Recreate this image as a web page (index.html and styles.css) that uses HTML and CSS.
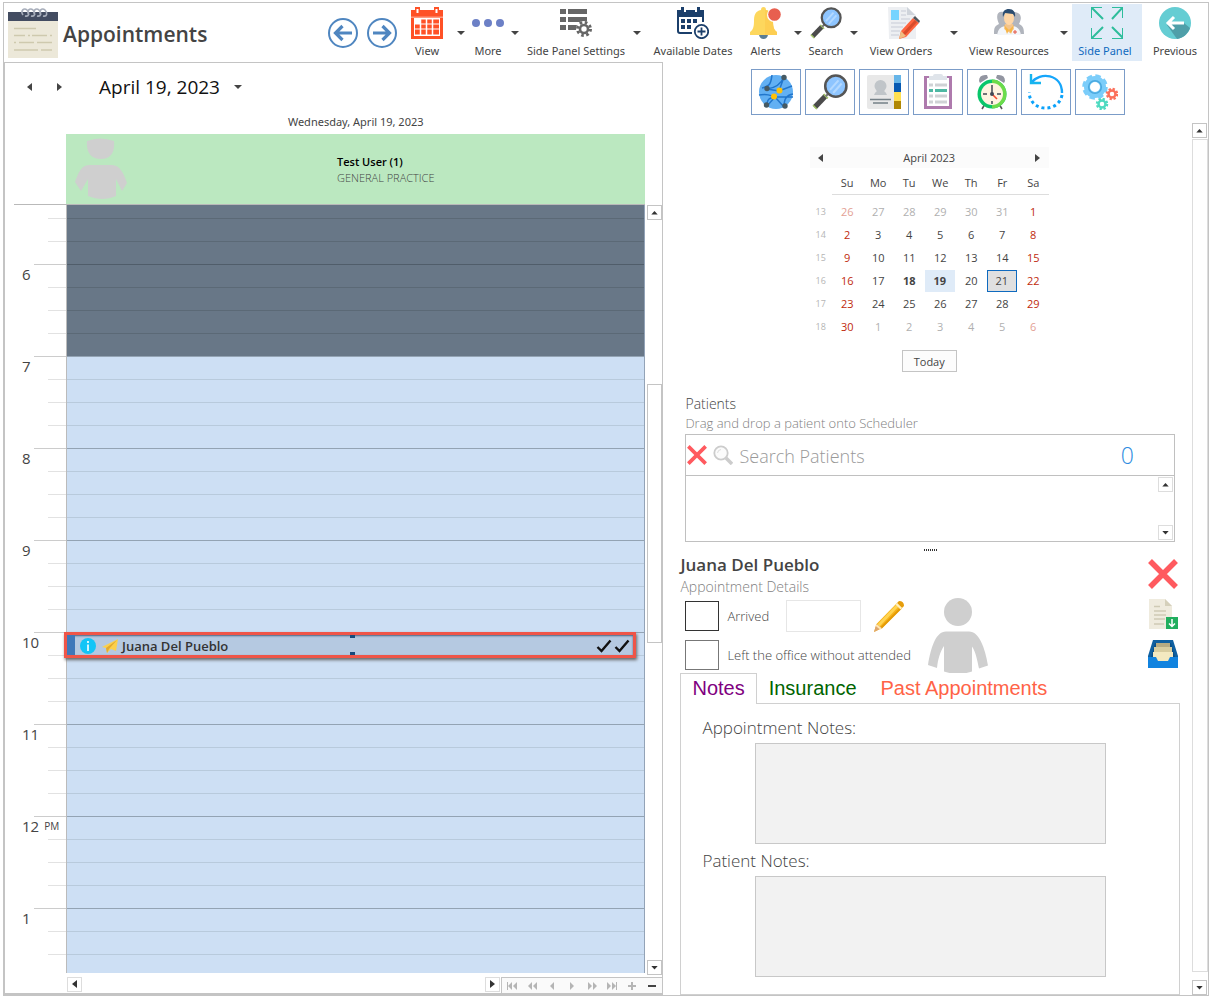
FILE: index.html
```html
<!DOCTYPE html>
<html lang="en">
<head>
<meta charset="utf-8">
<title>Appointments</title>
<link rel="stylesheet" href="styles.css">
</head>
<body>
<svg class="defs" aria-hidden="true">
  <symbol id="caret" viewBox="0 0 8 4"><path d="M0 0h8L4 4z" fill="#444"/></symbol>
  <symbol id="left" viewBox="0 0 5 8"><path d="M5 0v8L0 4z" fill="currentColor"/></symbol>
  <symbol id="right" viewBox="0 0 5 8"><path d="M0 0v8l5-4z" fill="currentColor"/></symbol>
  <symbol id="up" viewBox="0 0 8 5"><path d="M0 4.500h8L4 0z" fill="currentColor"/></symbol>
  <symbol id="down" viewBox="0 0 8 5"><path d="M0 0h8L4 4.500z" fill="currentColor"/></symbol>
  <symbol id="cross" viewBox="0 0 30 30"><path d="M2 2l26 26M28 2L2 28" stroke="#ff5a5f" stroke-width="5.500" fill="none"/></symbol>
  <symbol id="glass" viewBox="0 0 34 34">
    <path d="M2.500 31.500L13 20.500" stroke="#4b4b4b" stroke-width="5"/>
    <path d="M1 29.500l3.500 3.500M11 19l4 4" stroke="#a4c66a" stroke-width="1.500"/>
    <path d="M13 21l4-4" stroke="#777" stroke-width="2"/>
    <circle cx="22.500" cy="11.500" r="10" fill="#8ec5ff" stroke="#555" stroke-width="2.400"/>
    <path d="M17 15l8-9M20 18l8-9" stroke="#b4d9ff" stroke-width="2"/>
  </symbol>
  <symbol id="person" viewBox="0 0 60 75">
    <circle cx="30" cy="14" r="14" fill="#cfcfcf"/>
    <path d="M18 33.500h23c10 0 16 16 19 34l-9 3c-2-9-3-16-7-22v25c-8 3-20 3-28 0V48c-4 6-6 13-7 22l-9-3c3-18 8-33.500 18-33.500z" fill="#cfcfcf"/>
  </symbol>
</svg>
<div class="app">
  <header class="top">
    <svg class="logo" viewBox="0 0 50 50">
      <path d="M0 4h50v46H0z" fill="#ece8d9"/><path d="M0 4h50v9H0z" fill="#434c61"/>
      <g fill="none" stroke="#a8aebb" stroke-width="1.600"><path d="M15 7c-3-4 1-8 4-5s2 7-2 6M21 7c-3-4 1-8 4-5s2 7-2 6M27 7c-3-4 1-8 4-5s2 7-2 6M33 7c-3-4 1-8 4-5s2 7-2 6"/></g>
      <path d="M6 20.500h22M6 27.500h11M20 27.500h2M24 27.500h15M42 27.500h2M6 34.500h2M11 34.500h15M29 34.500h15M6 42h24M33 42h11" stroke="#cec9ae" stroke-width="1.700"/>
    </svg>
    <h1 class="title">Appointments</h1>
    <nav class="tools" aria-label="Toolbar">
      <button class="round" aria-label="Back"><svg viewBox="0 0 32 32"><circle cx="16" cy="16" r="14" fill="#fff" stroke="#4f86c0" stroke-width="2"/><path d="M25 16H9M15.500 9L8.500 16l7 7" fill="none" stroke="#4f86c0" stroke-width="3.200"/></svg></button>
      <button class="round" aria-label="Forward"><svg viewBox="0 0 32 32"><circle cx="16" cy="16" r="14" fill="#fff" stroke="#4f86c0" stroke-width="2"/><path d="M7 16h16M16.500 9l7 7-7 7" fill="none" stroke="#4f86c0" stroke-width="3.200"/></svg></button>
      <button class="tool t-view"><svg class="ic" viewBox="0 0 32 32"><path d="M0 3h4V0h5v3h14V0h5v3h4v29H0z" fill="#ff5126"/><path d="M5.500 2h2v4h-2zM24.500 2h2v4h-2z" fill="#fff"/><path d="M0 9.500h32v1.500H0z" fill="#ff9a80"/><path d="M3 11h26v18H3z" fill="#fff"/><path d="M10 12.500h18v4H10zM4 17.500h24v4H4zM4 22.500h24v5H4z" fill="#ff5126"/><path d="M9.500 12v16M15.500 12v16M21.500 12v16" stroke="#fff" stroke-width="1.500"/></svg><span>View</span></button>
      <button class="drop" aria-label="View options"><svg><use href="#caret"/></svg></button>
      <button class="tool t-more"><svg class="ic" viewBox="0 0 32 32"><g fill="#6c80c6"><circle cx="4" cy="16" r="4"/><circle cx="16" cy="16" r="4"/><circle cx="28" cy="16" r="4"/></g></svg><span>More</span></button>
      <button class="drop" aria-label="More options"><svg><use href="#caret"/></svg></button>
      <button class="tool t-settings"><svg class="ic" viewBox="0 0 32 32"><path d="M0 2h6v5H0zM8 2h19v5H8zM0 10h6v5H0zM8 10h19v5H8zM0 18h6v5H0zM8 18h10v5H8z" fill="#666"/><circle cx="24" cy="22" r="8" fill="#fff"/><circle cx="24" cy="22" r="6.500" fill="none" stroke="#666" stroke-width="3" stroke-dasharray="2.600 2.500"/><circle cx="24" cy="22" r="4" fill="#fff" stroke="#666" stroke-width="2.600"/></svg><span>Side Panel Settings</span></button>
      <button class="drop" aria-label="Side panel options"><svg><use href="#caret"/></svg></button>
      <button class="tool t-dates"><svg class="ic" viewBox="0 0 32 32"><path d="M1 4v20q0 2 2 2h12M26 4v11" fill="none" stroke="#1b3f6b" stroke-width="2"/><path d="M0 10V3h4V0h3v5h2V3h9v2h2V0h3v3h4v7z" fill="#1b3f6b"/><path d="M4 12h4v4H4zM10 12h4v4h-4zM16 12h4v4h-4zM4 18h4v4H4zM10 18h4v4h-4z" fill="#1b3f6b"/><circle cx="24.500" cy="24.500" r="6.700" fill="#fff" stroke="#1b3f6b" stroke-width="1.800"/><path d="M20.500 24.500h8M24.500 20.500v8" stroke="#1b3f6b" stroke-width="1.800"/></svg><span>Available Dates</span></button>
      <button class="tool t-alerts"><svg class="ic" viewBox="0 0 32 32"><path d="M9 28h9q-1 4-4.500 4T9 28z" fill="#5a7d95"/><path d="M11 3q0-3 2.500-3T16 3c6 1 7 6 7 11 0 6 1 9 4 11v3H0v-3c3-2 4-5 4-11 0-5 1-10 7-11z" fill="#fdd75d"/><path d="M15 3c7 1 7 6 8 11 0 6 1 9 4 11v3H15z" fill="#fdce52"/><circle cx="24" cy="8" r="7" fill="#fff"/><circle cx="24.500" cy="7.500" r="6.300" fill="#e85f4f"/></svg><span>Alerts</span></button>
      <button class="drop" aria-label="Alert options"><svg><use href="#caret"/></svg></button>
      <button class="tool t-search"><svg class="ic"><use href="#glass"/></svg><span>Search</span></button>
      <button class="drop" aria-label="Search options"><svg><use href="#caret"/></svg></button>
      <button class="tool t-orders"><svg class="ic" viewBox="0 0 32 32"><path d="M0 0h19l9 8v24H1z" fill="#edeff2"/><path d="M19 0v8h8z" fill="#cfd4db"/><path d="M3 3h8v10H3z" fill="#76d4ff"/><path d="M13 4h5M13 8h5M13 12h9M3 16h15M3 20h12M3 24h9M3 28h8" stroke="#d3d8df" stroke-width="1.500"/><path d="M25 11l6 5-13 14-7 2 2-8z" fill="#ff643f"/><path d="M28 14L15 28" stroke="#d84c2c" stroke-width="3"/><path d="M13 24l5 5-7 3z" fill="#efbd82"/><path d="M25 11l6 5 1-2-5-5z" fill="#51565d"/></svg><span>View Orders</span></button>
      <button class="drop" aria-label="Order options"><svg><use href="#caret"/></svg></button>
      <button class="tool t-res"><svg class="ic" viewBox="0 0 32 32"><path d="M1 27c0-7 1-8 5-10-4-9-1-13 4-12h12c5 1 8 4 4 12 4 2 5 4 5 10z" fill="#b1b5bd"/><path d="M4 28q1-8 8-9l4 3 4-3q7 1 8 9z" fill="#f3f6fa"/><path d="M12 17h8l1 5-4 4-6-4z" fill="#f3c48c"/><path d="M11 18l5 5-2 4zM21 18l-5 5 2 4z" fill="#f7b647"/><ellipse cx="16" cy="11" rx="5" ry="7" fill="#ffd6a5"/><path d="M10 10c-1-6 2-8 6-8s7 3 6 8l-2-3-8-1z" fill="#2c4d70"/><path d="M22 23v4M20 25h4" stroke="#e65443"/></svg><span>View Resources</span></button>
      <button class="drop" aria-label="Resource options"><svg><use href="#caret"/></svg></button>
      <button class="tool t-panel" aria-pressed="true"><svg class="ic" viewBox="0 0 32 32"><path d="M12 12L1 1M0 11V0h11M21 12L32 0M21 0h11v11M12 20L1 31M0 21v11h11M21 20l11 11M32 21v11H21" fill="none" stroke="#2dbd9b" stroke-width="2"/></svg><span>Side Panel</span></button>
      <button class="tool t-prev"><svg class="ic" viewBox="0 0 32 32"><circle cx="16" cy="16" r="16" fill="#65cdd3"/><path d="M25 16l6 5c-2 6-7 10-13 11L8 18z" fill="#4f9fa9"/><path d="M25 16H9M15 10l-6 6 6 6" fill="none" stroke="#fff" stroke-width="3"/></svg><span>Previous</span></button>
    </nav>
  </header>

  <div class="main">
    <section class="scheduler" aria-label="Scheduler">
      <div class="datebar">
        <button class="plain" aria-label="Previous day"><svg class="arrow"><use href="#left"/></svg></button>
        <button class="plain" aria-label="Next day"><svg class="arrow"><use href="#right"/></svg></button>
        <button class="date">April 19, 2023 <svg class="tri"><use href="#caret"/></svg></button>
      </div>
      <div class="dayname">Wednesday, April 19, 2023</div>
      <div class="resource">
        <svg class="mini" viewBox="0 0 54 62"><path d="M14 3q13-5 27 0c1 11-3 18-13 18S13 14 14 3zM16 27h23c8 0 12 9 15 18l-5 8-6-12v17c-9 4-18 4-28 0V41L8 53l-6-9c3-8 6-17 14-17z" fill="#cfcfcf"/></svg>
        <div class="who"><strong>Test User (1)</strong><span>GENERAL PRACTICE</span></div>
      </div>
      <div class="board">
        <div class="hours">
          <div class="hour early"><div class="time"></div><div class="slots off"></div></div>
          <div class="hour"><div class="time">6</div><div class="slots off"></div></div>
          <div class="hour"><div class="time">7</div><div class="slots"></div></div>
          <div class="hour"><div class="time">8</div><div class="slots"></div></div>
          <div class="hour"><div class="time">9</div><div class="slots"></div></div>
          <div class="hour"><div class="time">10</div><div class="slots">
            <div class="appt">
              <svg class="info" viewBox="0 0 16 16"><circle cx="8" cy="8" r="8" fill="#12c5f7"/><path d="M8 3v2M8 6.500V13" stroke="#fff" stroke-width="1.600"/></svg>
              <svg class="plane" viewBox="0 0 16 14"><path d="M0 8L16 0l-2 12-5-2-4 4-1-5z" fill="#fbd04c"/><path d="M4 9L15 1 7 10l-2 4z" fill="#e2aa30"/></svg>
              <span>Juana Del Pueblo</span>
              <svg class="checks" viewBox="0 0 34 14"><path d="M1.500 8l4 4L14.500 1.500M19.500 8l4 4 9-10.500" fill="none" stroke="#111" stroke-width="2.400"/></svg>
              <i class="grip gt"></i><i class="grip gb"></i>
            </div>
          </div></div>
          <div class="hour"><div class="time">11</div><div class="slots"></div></div>
          <div class="hour"><div class="time">12<small>PM</small></div><div class="slots"></div></div>
          <div class="hour late"><div class="time">1</div><div class="slots"></div></div>
        </div>
        <div class="vbar">
          <button class="sb" aria-label="Scroll up"><svg><use href="#up"/></svg></button>
          <div class="track"><div class="thumb"></div></div>
          <button class="sb" aria-label="Scroll down"><svg><use href="#down"/></svg></button>
        </div>
      </div>
      <div class="hbar">
        <button class="sb pale" aria-label="Scroll left"><svg class="arrow"><use href="#left"/></svg></button>
        <div class="spring"></div>
        <button class="sb pale" aria-label="Scroll right"><svg class="arrow"><use href="#right"/></svg></button>
        <div class="pager">
          <button aria-label="First"><svg viewBox="0 0 10 8"><path d="M0 0h1v8H0zM5 0v8L1 4zM10 0v8L6 4z"/></svg></button>
          <button aria-label="Back a page"><svg viewBox="0 0 10 8"><path d="M5 0v8L1 4zM10 0v8L6 4z"/></svg></button>
          <button aria-label="Back one"><svg viewBox="0 0 10 8"><path d="M7 0v8L3 4z"/></svg></button>
          <button aria-label="Forward one"><svg viewBox="0 0 10 8"><path d="M3 0v8l4-4z"/></svg></button>
          <button aria-label="Forward a page"><svg viewBox="0 0 10 8"><path d="M1 0v8l4-4zM6 0v8l4-4z"/></svg></button>
          <button aria-label="Last"><svg viewBox="0 0 10 8"><path d="M0 0v8l4-4zM5 0v8l4-4zM9 0h1v8H9z"/></svg></button>
          <button aria-label="Add"><svg viewBox="0 0 10 8"><path d="M4 0h2v3h3v2H6v3H4V5H1V3h3z"/></svg></button>
          <button class="dark" aria-label="Remove"><svg viewBox="0 0 10 8"><path d="M1 3h8v2H1z"/></svg></button>
        </div>
      </div>
    </section>

    <aside class="side">
      <div class="apps">
        <button aria-label="Network"><svg viewBox="0 0 36 36"><circle cx="18" cy="18" r="17" fill="#62b0f3"/><path d="M4 14C13 12 13 8 14 1M9 15c8-1 14-5 17-12M9 15l12 2 13-5M1 21c8-1 11 0 16 2M17 23l18 0M17 23l-8 9M17 23l9 10M21 17l5-14M26 33c0-9 3-12 9-13M9 32c0-7 2-8 8-9" fill="none" stroke="#2176cc" stroke-width="1.500"/><g fill="#455a64"><circle cx="26" cy="3.500" r="2.700"/><circle cx="9" cy="14.500" r="2.700"/><circle cx="8.500" cy="31" r="2.700"/><circle cx="27" cy="32" r="2.700"/></g><circle cx="21.500" cy="16.500" r="3" fill="#ffc107"/><circle cx="16" cy="22.500" r="3" fill="#ffc107"/></svg></button>
        <button aria-label="Find"><svg><use href="#glass"/></svg></button>
        <button aria-label="Contacts"><svg viewBox="0 0 36 36"><path d="M27 1h8v8h-8z" fill="#66b5e8"/><path d="M27 9h8v9h-8z" fill="#0759b2"/><path d="M27 18h8v9h-8z" fill="#ffe052"/><path d="M27 27h8v8h-8z" fill="#b08805"/><path d="M3 1h25v34H3q-2 0-2-2V3q0-2 2-2z" fill="#e8e8e8"/><circle cx="14.500" cy="12" r="6" fill="#c0c5c9"/><path d="M8 21q2-5 6.500-5t6.500 5z" fill="#c0c5c9"/><path d="M4 25.500h21M7 29h15" stroke="#748087" stroke-width="1.400"/></svg></button>
        <button aria-label="Checklist"><svg viewBox="0 0 36 36"><path d="M4 2h28v33H4z" fill="#ae7aad"/><path d="M7 4h22v28H7z" fill="#fff"/><path d="M9 2h4q0-2 2-2h6q2 0 2 2h4v4H9z" fill="#dfe4ea"/><path d="M9 11h4M15 11h12M9 22h4M15 22h12M9 28h4M15 28h12" stroke="#cfd2d5" stroke-width="3"/><path d="M9 16.500h4M15 16.500h12" stroke="#4fb8a3" stroke-width="3"/></svg></button>
        <button aria-label="Alarm"><svg viewBox="0 0 36 36"><path d="M5 7q0-7 8-6l1 3-8 5zM31 7q0-7-8-6l-1 3 8 5z" fill="#9295a1"/><path d="M8 35l3-5M28 35l-3-5" stroke="#555" stroke-width="1.600"/><circle cx="18" cy="20" r="14.500" fill="#08c66a"/><path d="M18 5.500a14.500 14.500 0 0 1 0 29z" fill="#6cdb4b"/><circle cx="18" cy="20" r="11" fill="#fff3e1"/><path d="M18 20V11M9 20h4M23 20h4M18 27v3" stroke="#434956" stroke-width="1.500"/><path d="M18 20l5 5" stroke="#f6492e" stroke-width="1.600"/><circle cx="18" cy="20" r="2" fill="#434956"/></svg></button>
        <button aria-label="Refresh"><svg viewBox="0 0 36 36"><path d="M3 9C12-3 34 0 34 19" fill="none" stroke="#16a6fb" stroke-width="2.400"/><path d="M3 0v9h10" fill="none" stroke="#16b5ee" stroke-width="2.400"/><path d="M34 21c-3 18-32 18-33-3" fill="none" stroke="#0ba2fa" stroke-width="3" stroke-dasharray="3 3"/></svg></button>
        <button aria-label="Options"><svg viewBox="0 0 36 36"><g fill="none"><circle cx="13" cy="13" r="11" stroke="#7bcdfa" stroke-width="3.500" stroke-dasharray="5.300 3.340"/><circle cx="13" cy="13" r="8" stroke="#7bcdfa" stroke-width="6"/><circle cx="13" cy="13" r="6.300" stroke="#4ba9df" stroke-width="1.600"/><circle cx="30" cy="20" r="5" stroke="#fb715c" stroke-width="2.500" stroke-dasharray="2.200 1.727"/><circle cx="30" cy="20" r="3.500" stroke="#fb715c" stroke-width="2.500"/><circle cx="20" cy="30" r="5" stroke="#4edac0" stroke-width="2.500" stroke-dasharray="2.200 1.727"/><circle cx="20" cy="30" r="3.500" stroke="#4edac0" stroke-width="2.500"/></g></svg></button>
      </div>
      <div class="scroller">
        <div class="content">
          <div class="calendar">
            <div class="month"><button class="plain" aria-label="Previous month"><svg class="arrow"><use href="#left"/></svg></button><span>April 2023</span><button class="plain" aria-label="Next month"><svg class="arrow"><use href="#right"/></svg></button></div>
            <table class="days">
              <thead><tr><td></td><th>Su</th><th>Mo</th><th>Tu</th><th>We</th><th>Th</th><th>Fr</th><th>Sa</th></tr></thead>
              <tbody>
                <tr class="gap"><td colspan="8"></td></tr>
                <tr><th>13</th><td class="dim">26</td><td class="dim">27</td><td class="dim">28</td><td class="dim">29</td><td class="dim">30</td><td class="dim">31</td><td>1</td></tr>
                <tr><th>14</th><td>2</td><td>3</td><td>4</td><td>5</td><td>6</td><td>7</td><td>8</td></tr>
                <tr><th>15</th><td>9</td><td>10</td><td>11</td><td>12</td><td>13</td><td>14</td><td>15</td></tr>
                <tr><th>16</th><td>16</td><td>17</td><td class="bold">18</td><td class="bold"><span class="mark picked">19</span></td><td>20</td><td><span class="mark today">21</span></td><td>22</td></tr>
                <tr><th>17</th><td>23</td><td>24</td><td>25</td><td>26</td><td>27</td><td>28</td><td>29</td></tr>
                <tr><th>18</th><td>30</td><td class="dim">1</td><td class="dim">2</td><td class="dim">3</td><td class="dim">4</td><td class="dim">5</td><td class="dim">6</td></tr>
              </tbody>
            </table>
            <button class="todaybtn">Today</button>
          </div>

          <div class="patients">
            <label class="plabel" for="find">Patients</label>
            <div class="hint">Drag and drop a patient onto Scheduler</div>
            <div class="findbox">
              <button class="plain" aria-label="Clear"><svg class="x20"><use href="#cross"/></svg></button>
              <svg class="lens" viewBox="0 0 20 20"><circle cx="8" cy="8" r="6.700" fill="#fbfbfb" stroke="#ccc" stroke-width="1.800"/><path d="M4.500 8A4 4 0 0 1 8 4.500" fill="none" stroke="#ddd"/><path d="M13 13l6 6" stroke="#ccc" stroke-width="3.500"/></svg>
              <input id="find" type="text" placeholder="Search Patients">
              <span class="count">0</span>
            </div>
            <div class="list">
              <button class="sb pale" aria-label="List up"><svg><use href="#up"/></svg></button>
              <button class="sb pale" aria-label="List down"><svg><use href="#down"/></svg></button>
            </div>
          </div>
          <div class="splitter"></div>

          <div class="details">
            <div class="info-col">
              <h2 class="name">Juana Del Pueblo</h2>
              <div class="sub">Appointment Details</div>
              <div class="checkrows">
                <div class="rows">
                  <div class="row"><input type="checkbox" id="arr" class="box"><label for="arr">Arrived</label><input class="timebox" type="text" aria-label="Arrival time"><button class="plain" aria-label="Edit"><svg class="pencil" viewBox="0 0 30 32"><path d="M0 32l2.500-8L23 3l5 5L8 28z" fill="#f6b31b"/><path d="M4 26L24 5" stroke="#ffd452" stroke-width="3"/><path d="M7 28L27 8" stroke="#e49b05" stroke-width="2"/><path d="M0 32l2.500-8L8 28z" fill="#dea66f"/><path d="M2 25l5 4" stroke="#ffe7b5" stroke-width="2"/><path d="M23 3l2-2q5 0 5 5l-2 2z" fill="#e69d0b"/><path d="M21.500 4.500l5 5 1.500-1.500-5-5z" fill="#fff0bd"/></svg></button></div>
                  <div class="row"><input type="checkbox" id="left-office" class="box soft"><label for="left-office">Left the office without attended</label></div>
                </div>
                <svg class="avatar"><use href="#person"/></svg>
              </div>
            </div>
            <div class="acts">
              <button class="plain" aria-label="Delete"><svg class="x30"><use href="#cross"/></svg></button>
              <button class="plain" aria-label="Export"><svg class="x30" viewBox="0 0 30 30"><path d="M1 0h16l7 7v23H1z" fill="#efebde"/><path d="M17 0v7h7z" fill="#d5d0bb"/><path d="M6 7.500h6M6 12h12M6 16h12M6 20h11M6 25h10" stroke="#cfcab5" stroke-width="1.400"/><path d="M18 18h12v12H18z" fill="#21ae5e"/><path d="M24 20v7M21 24.500l3 3 3-3" stroke="#fff" stroke-width="1.500" fill="none"/></svg></button>
              <button class="plain" aria-label="Archive"><svg class="x30" viewBox="0 0 30 30"><path d="M5 1h20l5 16v5H0v-5z" fill="#1060a0"/><path d="M7 4h16l4 14H3z" fill="#0b4f86"/><path d="M8 4h14v6H8z" fill="#b6ab83"/><path d="M6 8h18v7H6z" fill="#d8cda0"/><path d="M5 13h20v9H5z" fill="#f3e9c0"/><path d="M0 18h8l2 4h10l2-4h8v11H0z" fill="#1183df"/></svg></button>
            </div>
          </div>

          <div class="tabs" role="tablist">
            <button class="tab on" role="tab" aria-selected="true">Notes</button>
            <button class="tab ins" role="tab">Insurance</button>
            <button class="tab past" role="tab">Past Appointments</button>
          </div>
          <div class="panel" role="tabpanel">
            <label for="an">Appointment Notes:</label>
            <textarea id="an" class="note"></textarea>
            <label for="pn">Patient Notes:</label>
            <textarea id="pn" class="note"></textarea>
          </div>
        </div>
        <div class="vbar wide">
          <button class="sb" aria-label="Panel up"><svg><use href="#up"/></svg></button>
          <div class="track full"></div>
          <button class="sb" aria-label="Panel down"><svg><use href="#down"/></svg></button>
        </div>
      </div>
    </aside>
  </div>
</div>
</body>
</html>
```
FILE: styles.css
```css
* { box-sizing: border-box; }
body {
  margin: 0;
  padding: 2px 4px 4px 3px;
  background: #fff;
  color: #444;
  font-family: "Open Sans", "Noto Sans", sans-serif;
  font-size: 11px;
}
button, input, textarea { font: inherit; color: inherit; }
button { margin: 0; padding: 0; border: 0; background: none; display: flex; align-items: center; justify-content: center; }
svg { display: block; flex: none; }
.defs { position: absolute; width: 0; height: 0; }
.arrow { width: 5px; height: 8px; }

.app { border: 1px solid #c4c4c4; min-height: calc(100vh - 8px); display: flex; flex-direction: column; }

/* Top bar */
.top { display: flex; align-items: center; height: 59px; padding-left: 4px; }
.logo { width: 50px; height: 50px; }
.title { margin: 2px 0 0 5px; font-size: 21px; line-height: 28px; font-weight: 600; }
.tools { display: flex; align-items: stretch; margin-left: auto; height: 57px; font-family: "Noto Sans", "Open Sans", sans-serif; }
.round { width: 39px; }
.round svg { width: 32px; height: 32px; }
.tool { flex-direction: column; justify-content: flex-start; gap: 4px; padding-top: 3px; white-space: nowrap; line-height: 16px; }
.ic { width: 32px; height: 32px; }
.drop { width: 16px; }
.drop svg, .tri { width: 8px; height: 4px; }
.t-view { width: 52px; }
.t-more { width: 38px; }
.t-settings { width: 106px; }
.t-dates { width: 96px; }
.t-alerts { width: 49px; }
.t-search { width: 40px; }
.t-orders { width: 84px; }
.t-orders span { margin-right: 6px; }
.t-res { width: 94px; }
.t-panel { width: 70px; background: #dfebf8; color: #0f6abf; }
.t-panel span { margin-right: 4px; }
.t-prev { width: 66px; }

/* Two columns */
.main { flex: 1; display: grid; grid-template-columns: 660fr 545fr; }
.scheduler { display: flex; flex-direction: column; min-width: 0; border: 1px solid #c4c4c4; border-bottom-width: 2px; }
.datebar { display: flex; align-items: center; height: 48px; padding-left: 15px; }
.datebar .plain { width: 18px; margin-right: 12px; }
.date { gap: 14px; margin-left: 19px; font-size: 19px; line-height: 26px; color: #111; }
.dayname { height: 23px; padding-left: 61px; margin-right: 17px; line-height: 21px; text-align: center; font-family: "Noto Sans", "Open Sans", sans-serif; }
.resource { display: flex; align-items: center; height: 70px; margin: 0 17px 0 61px; background: #bbe8c0; }
.mini { width: 54px; height: 62px; margin-left: 7px; }
.who { display: flex; flex-direction: column; margin-left: 210px; padding-top: 1px; line-height: 16px; color: #444; font-weight: 300; }
.who strong { color: #000; font-weight: 600; }

.board { display: flex; flex: 1; }
.hours { flex: 1; margin-left: 9px; border-top: 1px solid #b9b9b9; }
.hour { display: grid; grid-template-columns: 53px 1fr; height: 92px; }
.hour.early { height: 59px; }
.hour.late { height: 65px; }
.time {
  padding-left: 8px; font-size: 15px; line-height: 20px;
  border-right: 1px solid #bbb;
  background: linear-gradient(#ccc, #ccc) 20px 0 / 40px 1px no-repeat,
    linear-gradient(#e2e2e2 1px, transparent 1px) 34px 0 / 40px 23px repeat-y;
}
.time small { font-size: 10px; margin-left: 5px; vertical-align: 2px; }
.early .time { background: linear-gradient(#e2e2e2 1px, transparent 1px) 34px 100% / 40px 23px repeat-y; }
.slots {
  position: relative;
  border-right: 1px solid #93a3b7;
  background: linear-gradient(#93a3b3, #93a3b3) 0 0 / 100% 1px no-repeat,
    linear-gradient(#b8cadc 1px, transparent 1px) 0 0 / 100% 23px, #cddff4;
}
.slots.off {
  background: linear-gradient(#505d6a, #505d6a) 0 0 / 100% 1px no-repeat,
    linear-gradient(#5b6976 1px, transparent 1px) 0 0 / 100% 23px, #687787;
}
.early .slots.off { background: linear-gradient(#5b6976 1px, transparent 1px) 0 100% / 100% 23px, #687787; }
.appt {
  position: absolute; z-index: 1; top: 0; left: -3px; right: 8px; height: 26px;
  display: flex; align-items: center; gap: 6px; padding: 1px 3px 0 13px;
  border: 3px solid #ef5548; background: #b5c9e1; box-shadow: 1px 2px 3px #666, inset 8px 0 #3f78b9, inset 0 1px 2px #47617f;
  color: #333; font-size: 13px; font-weight: 600; line-height: 18px;
}
.info { width: 16px; height: 16px; }
.plane { width: 16px; height: 14px; }
.appt span { flex: 1; margin-left: -2px; }
.checks { width: 34px; height: 14px; }
.grip { position: absolute; left: 50%; width: 5px; height: 3px; background: #174a7c; }
.gt { top: 0; }
.gb { bottom: 0; }

.vbar { display: flex; flex-direction: column; width: 17px; padding: 1px 1px 0 2px; }
.sb { width: 15px; height: 15px; flex: none; border: 1px solid #c4c4c4; color: #333; background: #fff; }
.sb svg { width: 7px; height: 4px; }
.sb svg.arrow { width: 5px; height: 8px; }
.sb.pale { border-color: #ddd; }
.track { flex: 1; width: 15px; display: grid; grid-template-rows: 164fr 258fr 317fr; }
.thumb { grid-row: 2; border: 1px solid #c4c4c4; }
.hbar { display: flex; align-items: center; height: 18px; padding-left: 62px; }
.spring { flex: 1; }
.pager { display: flex; align-self: flex-end; height: 16px; width: 161px; margin-left: 1px; border: 1px solid #c4c4c4; border-right: 0; border-bottom: 0; background: #fafafa; }
.pager button { flex: 1; }
.pager svg { width: 10px; height: 8px; fill: #b5b5b5; }
.pager .dark svg { fill: #444; }

/* Side panel */
.side { display: flex; flex-direction: column; min-width: 0; }
.apps { display: flex; justify-content: center; gap: 4px; padding: 7px 0 8px 5px; }
.apps button { width: 50px; height: 46px; border: 1px solid #7b9cc8; }
.apps svg { width: 36px; height: 36px; }
.scroller { display: flex; flex: 1; }
.content { flex: 1; display: flex; flex-direction: column; padding: 24px 12px 0 17px; }
.wide { padding: 0; width: 16px; }
.wide .track.full { border: 1px solid #ddd; width: 16px; margin: 1px 0 8px; }

.calendar { align-self: center; display: flex; flex-direction: column; align-items: center; padding-right: 2px; }
.month { display: flex; align-self: stretch; justify-content: space-between; height: 21px; line-height: 21px; background: #fbfbfb; }
.month .plain { width: 22px; }
.days { border-collapse: collapse; table-layout: fixed; width: 239px; text-align: center; }
.days th, .days td { width: 31px; padding: 0; height: 23px; line-height: 16px; font-weight: 400; }
.days tr > :first-child { width: 22px; }
.days thead th { height: 26px; padding-top: 5px; border-bottom: 1px solid #ddd; }
.days tbody th { font-size: 9px; color: #b5b5b5; }
.days .gap td { height: 6px; }
.days td:nth-child(2), .days td:last-child { color: #c02a0c; }
.days td.dim { color: #b0b0b0; }
.days td.dim:nth-child(2), .days td.dim:last-child { color: #e3a195; }
.days td.bold { font-weight: 700; }
.mark { display: block; width: 30px; height: 22px; line-height: 22px; }
.picked { background: #dfebf8; }
.today { border: 1px solid #0f6abf; background: #e0e0e0; line-height: 20px; }
.todaybtn { margin-top: 12px; width: 55px; height: 22px; border: 1px solid #c4c4c4; background: #fcfcfc; }

.patients { margin: 22px 0 0 5px; padding-right: 5px; font-weight: 300; }
.plabel { display: block; font-size: 14px; line-height: 20px; }
.hint { font-size: 13px; line-height: 18px; margin-bottom: 2px; color: #808080; }
.findbox { display: flex; align-items: center; gap: 6px; height: 42px; border: 1px solid #c0c0c0; padding: 0 40px 0 1px; }
.x20 { width: 20px; height: 20px; }
.x30 { width: 30px; height: 30px; }
.lens { width: 20px; height: 20px; }
#find { flex: 1; min-width: 0; border: 0; padding: 2px 0 0; font-size: 18px; background: none; }
#find::placeholder { color: #999; opacity: 1; }
.count { font-size: 23px; line-height: 30px; color: #2e8ce0; }
.list { display: flex; flex-direction: column; justify-content: space-between; align-items: flex-end; height: 66px; padding: 1px; border: 1px solid #c0c0c0; border-top: 0; }
.splitter { align-self: center; width: 13px; height: 2px; margin: 7px 0 3px; background: repeating-linear-gradient(90deg, #333 0 1px, transparent 1px 2px); }

.details { display: flex; justify-content: space-between; padding-right: 2px; }
.name { margin: 0; font-size: 17px; line-height: 22px; font-weight: 600; }
.sub { font-size: 14px; line-height: 22px; font-weight: 300; color: #808080; }
.checkrows { display: flex; gap: 17px; }
.rows { padding: 2px 0 0 5px; }
.row { display: flex; align-items: center; gap: 8px; height: 32px; margin-bottom: 7px; font-size: 13px; font-weight: 300; }
.row:last-child { margin-bottom: 2px; }
.box { appearance: none; width: 34px; height: 30px; margin: 0; border: 1px solid #333; background: #fff; }
.box.soft { border-color: #777; }
.timebox { width: 75px; height: 32px; margin: 0 5px 0 9px; border: 1px solid #e6e6e6; }
.pencil { width: 30px; height: 32px; }
.avatar { width: 60px; height: 75px; }
.acts { display: flex; flex-direction: column; gap: 10px; padding-top: 5px; }

.tabs { display: flex; font: 20px/28px "Liberation Sans", Arial, sans-serif; }
.tab { height: 30px; padding: 0 11px 2px; border: 1px solid transparent; border-bottom: 0; }
.tab.on { position: relative; border-color: #d0d0d0; background: #fff; color: purple; margin-bottom: -1px; height: 31px; }
.ins { color: #006400; }
.past { color: #ff6347; }
.panel { flex: 1; padding: 11px 73px 13px 21px; border: 1px solid #d0d0d0; font-size: 17px; line-height: 26px; font-weight: 300; }
.panel label { display: block; }
.note { display: block; width: calc(100% - 53px); height: 101px; margin: 2px 0 4px 53px; resize: none; border: 1px solid #c8c8c8; background: #f2f2f2; }
```
